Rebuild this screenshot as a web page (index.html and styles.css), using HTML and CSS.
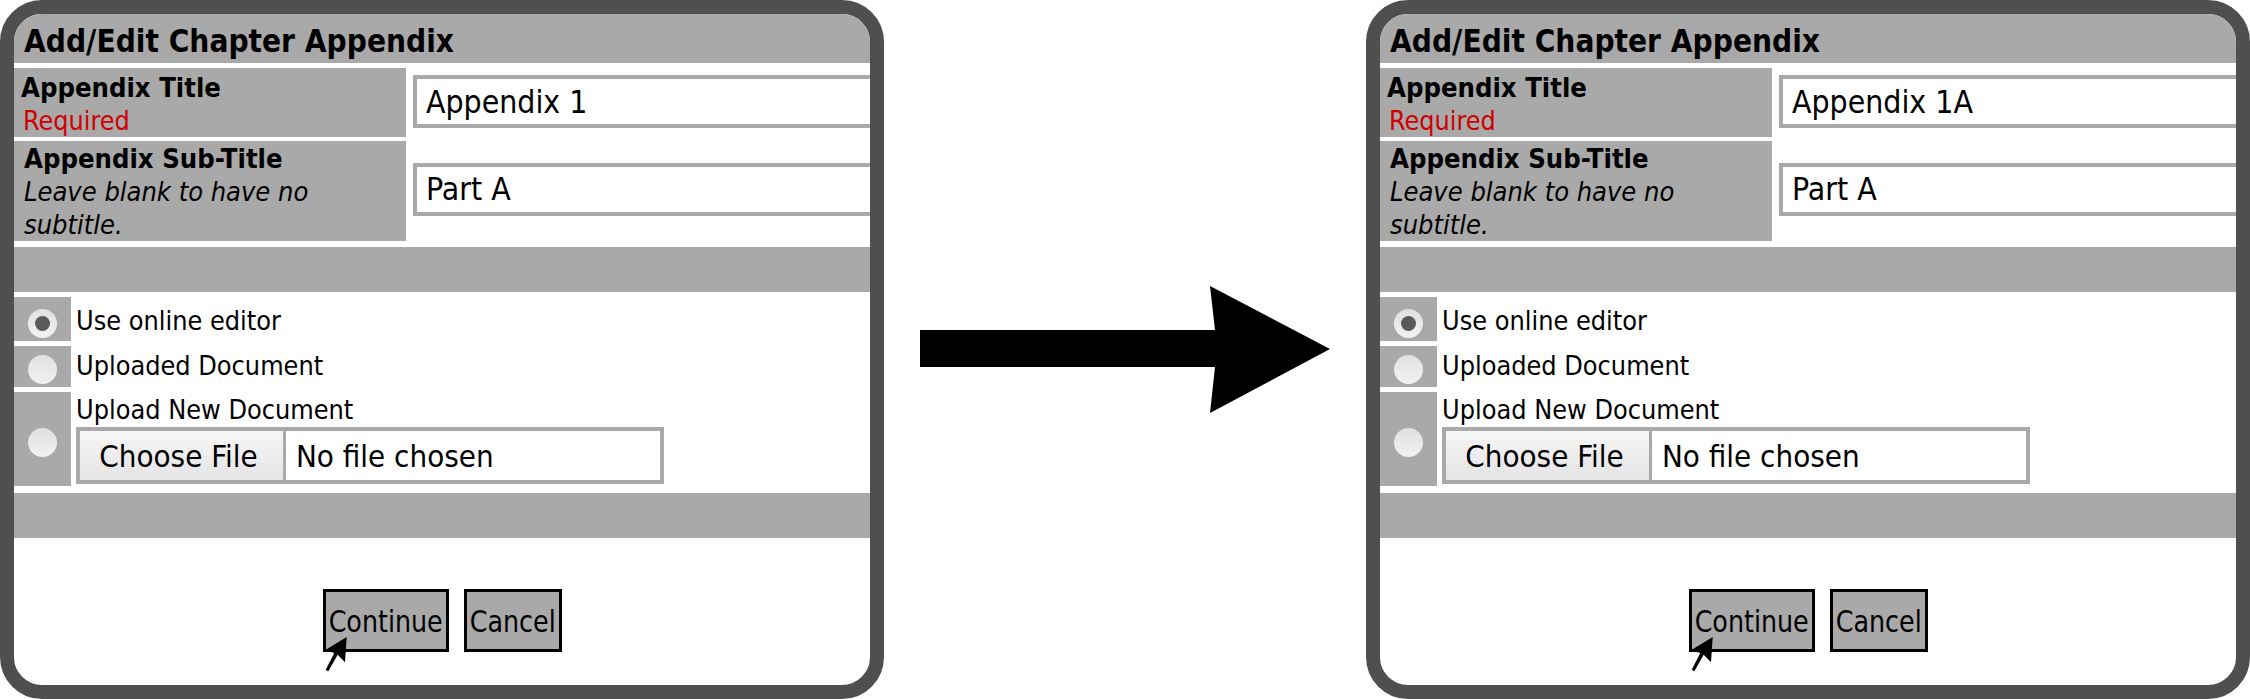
FILE: index.html
```html
<!DOCTYPE html>
<html lang="en">
<head>
<meta charset="utf-8">
<title>Add/Edit Chapter Appendix</title>
<link rel="stylesheet" href="styles.css">
</head>
<body>
<main class="page">
  <section class="window">
    <h1 class="title">Add/Edit Chapter Appendix</h1>
    <div class="row row-title">
      <div class="label"><strong class="name name-first">Appendix Title</strong><span class="req">Required</span></div>
      <div class="field"><input class="text" type="text" value="Appendix 1"></div>
    </div>
    <div class="row row-sub">
      <div class="label"><strong class="name">Appendix Sub-Title</strong><em class="hint">Leave blank to have no subtitle.</em></div>
      <div class="field"><input class="text" type="text" value="Part A"></div>
    </div>
    <div class="band"></div>
    <div class="opt opt-a">
      <div class="cell"><span class="radio on"></span></div>
      <div class="opt-text">Use online editor</div>
    </div>
    <div class="opt opt-b">
      <div class="cell"><span class="radio"></span></div>
      <div class="opt-text">Uploaded Document</div>
    </div>
    <div class="opt opt-c">
      <div class="cell"><span class="radio"></span></div>
      <div class="opt-text">Upload New Document
        <div class="file"><span class="file-btn">Choose File</span><span class="file-name">No file chosen</span></div>
      </div>
    </div>
    <div class="band band-2"></div>
    <div class="actions">
      <span class="btn btn-continue"><span class="btn-label">Continue</span>
        <svg class="cursor" viewBox="0 0 22 35" width="22" height="35"><path d="M21.7 0 L20 25.3 L12.7 17.7 L3.3 34.3 L0.7 32.7 L9.3 16 L0 13.3 Z"/></svg>
      </span>
      <span class="btn btn-cancel"><span class="btn-label">Cancel</span></span>
    </div>
  </section>

  <svg class="arrow" viewBox="0 0 410 127" width="410" height="127"><path d="M0 44 H295 L290 0 L410 63 L290 127 L295 81 H0 Z"/></svg>

  <section class="window">
    <h1 class="title">Add/Edit Chapter Appendix</h1>
    <div class="row row-title">
      <div class="label"><strong class="name name-first">Appendix Title</strong><span class="req">Required</span></div>
      <div class="field"><input class="text" type="text" value="Appendix 1A"></div>
    </div>
    <div class="row row-sub">
      <div class="label"><strong class="name">Appendix Sub-Title</strong><em class="hint">Leave blank to have no subtitle.</em></div>
      <div class="field"><input class="text" type="text" value="Part A"></div>
    </div>
    <div class="band"></div>
    <div class="opt opt-a">
      <div class="cell"><span class="radio on"></span></div>
      <div class="opt-text">Use online editor</div>
    </div>
    <div class="opt opt-b">
      <div class="cell"><span class="radio"></span></div>
      <div class="opt-text">Uploaded Document</div>
    </div>
    <div class="opt opt-c">
      <div class="cell"><span class="radio"></span></div>
      <div class="opt-text">Upload New Document
        <div class="file"><span class="file-btn">Choose File</span><span class="file-name">No file chosen</span></div>
      </div>
    </div>
    <div class="band band-2"></div>
    <div class="actions">
      <span class="btn btn-continue"><span class="btn-label">Continue</span>
        <svg class="cursor" viewBox="0 0 22 35" width="22" height="35"><path d="M21.7 0 L20 25.3 L12.7 17.7 L3.3 34.3 L0.7 32.7 L9.3 16 L0 13.3 Z"/></svg>
      </span>
      <span class="btn btn-cancel"><span class="btn-label">Cancel</span></span>
    </div>
  </section>
</main>
</body>
</html>
```
FILE: styles.css
```css
* { box-sizing: border-box; }
html, body { margin: 0; padding: 0; background: #fff; }
body { font-family: "DejaVu Sans", "Noto Sans", sans-serif; font-stretch: condensed; color: #000; overflow: hidden; }

.page { display: flex; justify-content: space-between; align-items: flex-start; width: 2250px; height: 699px; }

.window {
  width: 884px;
  height: 699px;
  border: 14px solid #4f4f4f;
  border-radius: 42px;
  background: #fff;
  overflow: hidden;
  display: flex;
  flex-direction: column;
}

.title {
  margin: 0 0 5px;
  height: 49px;
  padding: 7px 0 0 10px;
  background: #a9a9a9;
  font-size: 31.3px;
  line-height: 40px;
  font-weight: 700;
  white-space: nowrap;
}

.row { display: grid; grid-template-columns: 392px 1fr; column-gap: 7px; margin-bottom: 5px; }
.row-title { height: 68px; }
.row-sub { height: 99px; margin-bottom: 7px; }

.label { background: #a9a9a9; padding-left: 10px; display: flex; flex-direction: column; }
.name { font-size: 27.2px; line-height: 33px; white-space: nowrap; }
.row-title .label { padding-top: 3px; }
.row-sub .label { padding-top: 1px; }
.name-first { margin-left: -3px; }
.req { font-size: 26.7px; line-height: 33px; color: #d00000; margin-left: -1px; }
.hint { font-size: 27px; line-height: 33px; width: 350px; }

.field { display: flex; align-items: center; overflow: visible; }
.row-title .field { padding-bottom: 2px; }
.row-sub .field { padding-bottom: 4px; }
.text {
  width: 480px;
  height: 53px;
  flex: none;
  border: 4px solid #a9a9a9;
  background: #fff;
  padding: 0 0 0 9px;
  margin: 0;
  font: inherit;
  font-size: 31.7px;
  color: #000;
  outline: none;
}

.band { height: 45px; background: #a9a9a9; margin-bottom: 5px; flex: none; }
.band-2 { margin: 7px 0 0; }

.opt { display: grid; grid-template-columns: 57px 1fr; column-gap: 5px; margin-bottom: 5px; }
.opt-a { height: 44px; }
.opt-b { height: 41px; }
.opt-c { height: 94px; margin-bottom: 0; }

.cell { background: #a9a9a9; display: flex; align-items: center; justify-content: center; }
.opt-a .cell { padding-top: 8px; }
.opt-b .cell { padding-top: 5px; }
.opt-c .cell { padding-top: 6px; }
.radio {
  width: 29px;
  height: 29px;
  border-radius: 50%;
  background: linear-gradient(#e0e0e0, #f2f2f2);
  display: flex;
  align-items: center;
  justify-content: center;
}
.radio.on::after {
  content: "";
  width: 15px;
  height: 15px;
  border-radius: 50%;
  background: #5a5a5a;
}

.opt-text { font-size: 26.8px; line-height: 34px; white-space: nowrap; }
.opt-a .opt-text { padding-top: 7px; }
.opt-b .opt-text { padding-top: 3px; }
.opt-c .opt-text { line-height: 35px; }

.file {
  display: flex;
  width: 588px;
  height: 57px;
  border: 4px solid #a9a9a9;
  background: #fff;
  font-size: 31px;
  line-height: 50px;
}
.file-btn {
  width: 206px;
  padding-right: 6px;
  border-right: 3px solid #a9a9a9;
  background: linear-gradient(#f6f6f6, #e4e4e4);
  text-align: center;
}
.file-name { padding-left: 10px; }

.actions { display: flex; gap: 15px; padding: 51px 0 0 309px; }
.btn {
  position: relative;
  display: flex;
  justify-content: center;
  height: 63px;
  border: 3px solid #000;
  background: #a9a9a9;
  font-size: 30px;
  line-height: 59px;
  white-space: nowrap;
}
.btn-continue { width: 126px; }
.btn-cancel { width: 98px; }
.btn-label { display: inline-block; flex: none; transform: scaleX(0.94); }
.cursor { position: absolute; left: -1px; top: 45px; }

.arrow { align-self: flex-start; margin-top: 286px; flex: none; }
```
